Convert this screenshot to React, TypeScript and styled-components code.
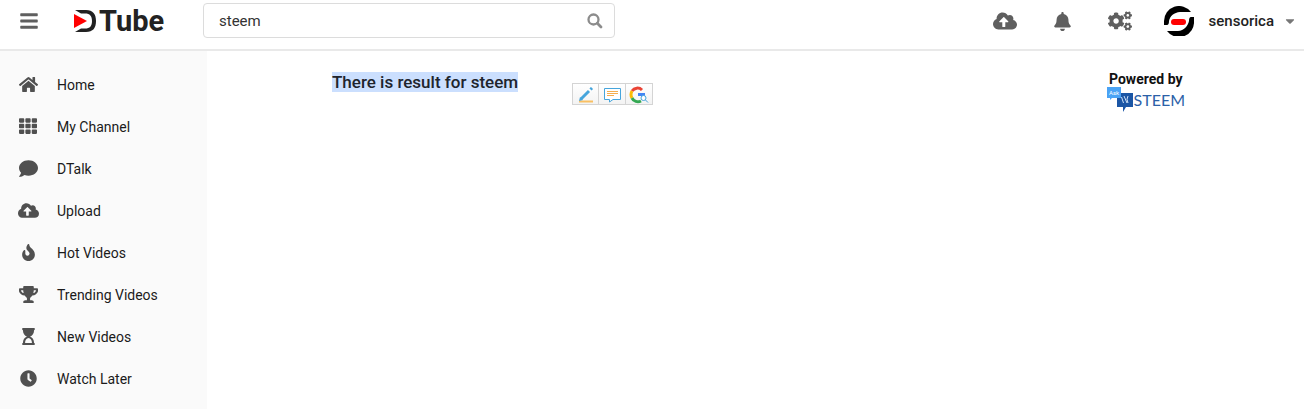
import React from 'react';
import styled, { createGlobalStyle } from 'styled-components';
import type { IconType } from 'react-icons';
import {
  FaBars, FaBell, FaCaretDown, FaClock, FaCloudUploadAlt, FaCogs, FaComment, FaFire,
  FaHome, FaHourglassStart, FaTh, FaTrophy,
} from 'react-icons/fa';

const GlobalStyle = createGlobalStyle`
  *, *::before, *::after { box-sizing: border-box; }
  body {
    margin: 0;
    background: #fff;
    color: #1b1b1b;
    font: 14px/20px Roboto, "Liberation Sans", sans-serif;
  }
  svg { flex: none; }
`;

const Page = styled.div`
  min-height: 100vh;
  display: flex;
  flex-direction: column;
`;

const TopBar = styled.header`
  display: flex;
  align-items: flex-start;
  height: 51px;
  padding: 0 7px 0 19px;
  border-bottom: 2px solid #e9e9e9;
  background: #fff;
`;

const BarButton = styled.button`
  display: flex;
  align-items: center;
  height: 42px;
  padding: 0;
  border: 0;
  background: none;
  color: #5f5f5f;
  cursor: pointer;
`;

const Brand = styled.a`
  display: flex;
  align-items: center;
  gap: 1px;
  width: 129px;
  height: 42px;
  margin-left: 35px;
  color: #222;
  font-size: 29px;
  font-weight: 700;
  line-height: 42px;
  text-decoration: none;
`;

const SearchForm = styled.form`
  display: flex;
  align-items: center;
  flex: 0 1 412px;
  height: 35px;
  margin-top: 3px;
  padding-right: 11px;
  border: 1px solid #dcdcdc;
  border-radius: 4px;
`;

const SearchInput = styled.input`
  flex: 1;
  min-width: 0;
  padding: 0 15px;
  border: 0;
  outline: 0;
  background: none;
  color: #333;
  font: 15px/20px Roboto, "Liberation Sans", sans-serif;
`;

const SearchButton = styled.button`
  display: flex;
  padding: 0;
  border: 0;
  background: none;
  color: #8c8c8c;
  cursor: pointer;
`;

const Actions = styled.nav`
  display: flex;
  align-items: center;
  margin-left: auto;
`;

const ActionGroup = styled.div`
  display: flex;
  gap: 36px;
  margin-right: 32px;
`;

const UserButton = styled(BarButton)`
  color: #222;
  font: 500 15px/20px Roboto, "Liberation Sans", sans-serif;
  gap: 15px;
`;

const UserCaret = styled(FaCaretDown)`
  margin-left: -6px;
  color: #777;
`;

const Body = styled.div`
  display: flex;
  flex: 1;
`;

const Sidebar = styled.nav`
  flex: none;
  width: 207px;
  padding-top: 13px;
  background: #fafafa;
`;

const MenuLink = styled.a`
  display: flex;
  align-items: center;
  height: 42px;
  color: #1b1b1b;
  text-decoration: none;
`;

const MenuIcon = styled.span`
  display: flex;
  align-items: center;
  justify-content: center;
  width: 57px;
  height: 22px;
  padding-right: 1px;
  margin-bottom: 2px;
  color: #505050;
`;

const Main = styled.main`
  display: flex;
  align-items: flex-start;
  flex: 1;
  padding: 21px 119px 0 125px;
`;

const Heading = styled.h1`
  margin: 0;
  color: #20242c;
  font-size: 17px;
  font-weight: 500;
  line-height: 20px;
`;

const Selected = styled.mark`
  background: #cbdffe;
  color: inherit;
`;

const ToolGroup = styled.div`
  display: flex;
  margin: 11px 0 0 54px;
  border: 1px solid #d4d4d4;
`;

const ToolButton = styled.button`
  display: flex;
  align-items: center;
  justify-content: center;
  width: 25px;
  height: 20px;
  padding: 2px 0 0;
  border: 0;
  background: linear-gradient(#fff, #f3f3f3);
  cursor: pointer;

  & + & {
    width: 27px;
    border-left: 1px solid #d4d4d4;
  }
`;

const PoweredBy = styled.a`
  display: flex;
  flex-direction: column;
  align-items: center;
  margin-left: auto;
  color: #111;
  font-size: 14px;
  font-weight: 700;
  line-height: 15px;
  text-decoration: none;
`;

const SteemBrand = styled.span`
  display: flex;
  color: #2b61a8;
  font: 16px/26px Lato, sans-serif;
`;

const menu: { label: string; icon: IconType; size: number }[] = [
  { label: 'Home', icon: FaHome, size: 19 },
  { label: 'My Channel', icon: FaTh, size: 18 },
  { label: 'DTalk', icon: FaComment, size: 19 },
  { label: 'Upload', icon: FaCloudUploadAlt, size: 21 },
  { label: 'Hot Videos', icon: FaFire, size: 17 },
  { label: 'Trending Videos', icon: FaTrophy, size: 19 },
  { label: 'New Videos', icon: FaHourglassStart, size: 17 },
  { label: 'Watch Later', icon: FaClock, size: 17 },
];

const BrandMark = () => (
  <svg width="24" height="24" viewBox="0 0 24 24" aria-hidden="true">
    <path d="M1 1H12C19 1 22 5 22 12S19 23 12 23H1L7 19.500H11C16 19.500 18 17 18 12S16 4.500 11 4.500H7Z" fill="#222" />
    <path d="M0 5L13 12L0 19Z" fill="#f00" />
  </svg>
);

const SearchIcon = () => (
  <svg width="16" height="16" viewBox="0 0 16 16" fill="none" stroke="currentColor" aria-hidden="true">
    <circle cx="6.500" cy="6.500" r="5" strokeWidth="2.300" />
    <path d="M10.300 10.300L14 14" strokeWidth="2.800" strokeLinecap="round" />
  </svg>
);

const Avatar = () => (
  <svg width="30" height="30" viewBox="0 0 30 30" aria-hidden="true">
    <path d="M0 19V15A15 15 0 0 1 27 6H16C10 6.500 6 10 5 15Q5 19 3 19Z" fill="#000" />
    <path d="M30 11V15A15 15 0 0 1 3 25H14C20 24.500 24 20 25 15Q25 11 27 11Z" fill="#000" />
    <rect x="7" y="13" width="15" height="6" rx="3" fill="#f00" />
  </svg>
);

const Pencil = () => (
  <svg width="16" height="16" viewBox="0 0 16 16" aria-hidden="true">
    <path d="M1 14.500H15" stroke="#f9c063" strokeWidth="2" />
    <path d="M3 12L11 4M12.500 2.500L14 1" stroke="#46a5dc" strokeWidth="3" />
    <path d="M1 14L2 10L5 13Z" fill="#46a5dc" />
  </svg>
);

const Comment = () => (
  <svg width="18" height="16" viewBox="0 0 18 16" fill="none" aria-hidden="true">
    <path d="M1.500 1.500H17.500V12.500H10L6.500 15V12.500H1.500Z" fill="#fff" stroke="#46a5dc" />
    <path d="M4 4.500H15M4 6.500H15M4 8.500H11" stroke="#f5ad4e" />
  </svg>
);

const GoogleSearch = () => (
  <svg width="20" height="18" viewBox="0 0 20 18" fill="none" aria-hidden="true">
    <path d="M3 5A6.500 6.500 0 0 1 13 4" stroke="#ea4335" strokeWidth="3" />
    <path d="M3 5A7 7 0 0 0 3 12" stroke="#fbbc05" strokeWidth="3" />
    <path d="M3 12A6.500 6.500 0 0 0 12 15" stroke="#34a853" strokeWidth="3" />
    <path d="M9 8.500H16" stroke="#4285f4" strokeWidth="3" />
    <circle cx="14.500" cy="12" r="2.500" fill="#fff" stroke="#46a5dc" />
    <path d="M16.500 14L19 16.500" stroke="#46a5dc" />
  </svg>
);

const SteemMark = () => (
  <svg width="27" height="26" viewBox="0 0 27 26" aria-hidden="true">
    <path d="M10 6H26V20H19L16 25V20H10Z" fill="#1b56a5" />
    <path d="M0 0H14V11H5L3 13V11H0Z" fill="#4aa3f5" />
    <text x="2" y="8" fontSize="6" fontFamily="Roboto, sans-serif" fill="#fff">Ask</text>
    <path d="M14.500 10L16.500 16M17 9L20 16M21 9Q19 12 21 16" stroke="#cfe2f8" fill="none" />
  </svg>
);

export default function App() {
  return (
    <Page>
      <GlobalStyle />
      <TopBar>
        <BarButton aria-label="Menu"><FaBars size={20} /></BarButton>
        <Brand href="#"><BrandMark />Tube</Brand>
        <SearchForm role="search">
          <SearchInput aria-label="Search" defaultValue="steem" />
          <SearchButton type="submit" aria-label="Submit search"><SearchIcon /></SearchButton>
        </SearchForm>
        <Actions>
          <ActionGroup>
            <BarButton aria-label="Upload"><FaCloudUploadAlt size={24} /></BarButton>
            <BarButton aria-label="Notifications"><FaBell size={19} /></BarButton>
            <BarButton aria-label="Settings"><FaCogs size={24} /></BarButton>
          </ActionGroup>
          <UserButton><Avatar />sensorica<UserCaret size={14} /></UserButton>
        </Actions>
      </TopBar>
      <Body>
        <Sidebar>
          {menu.map(({ label, icon: Icon, size }) => (
            <MenuLink href="#" key={label}>
              <MenuIcon><Icon size={size} /></MenuIcon>
              {label}
            </MenuLink>
          ))}
        </Sidebar>
        <Main>
          <Heading><Selected>There is result for steem</Selected></Heading>
          <ToolGroup>
            <ToolButton aria-label="Edit"><Pencil /></ToolButton>
            <ToolButton aria-label="Comment"><Comment /></ToolButton>
            <ToolButton aria-label="Search Google"><GoogleSearch /></ToolButton>
          </ToolGroup>
          <PoweredBy href="#">
            Powered by
            <SteemBrand><SteemMark />STEEM</SteemBrand>
          </PoweredBy>
        </Main>
      </Body>
    </Page>
  );
}
